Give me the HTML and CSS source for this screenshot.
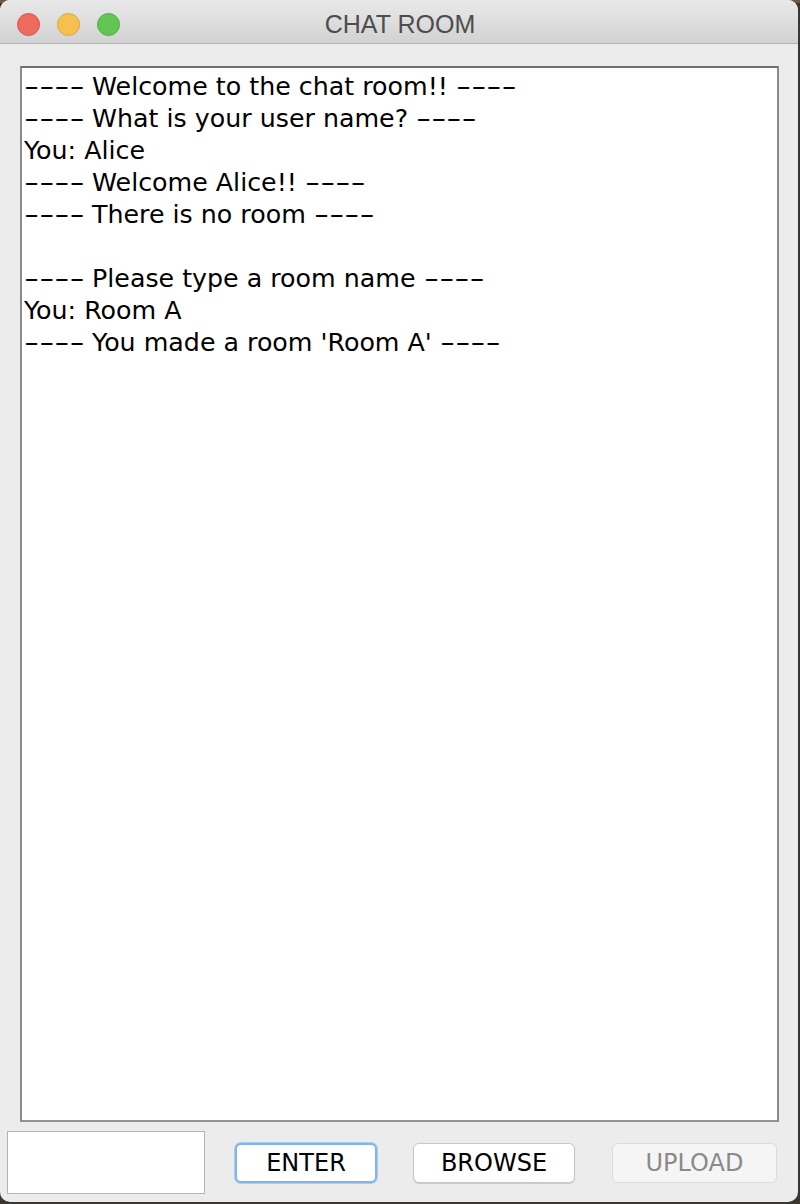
FILE: index.html
```html
<!DOCTYPE html>
<html>
<head>
<meta charset="utf-8">
<link rel="stylesheet" href="styles.css">
</head>
<body>
<div class="window">
  <div class="titlebar">
    <div class="lights">
      <span class="light red"></span>
      <span class="light yellow"></span>
      <span class="light green"></span>
    </div>
    <div class="title">CHAT ROOM</div>
  </div>
  <div class="body">
    <div class="log">
      <div class="line"><span class="dash">----</span> Welcome to the chat room!! <span class="dash">----</span></div>
      <div class="line"><span class="dash">----</span> What is your user name? <span class="dash">----</span></div>
      <div class="line">You: Alice</div>
      <div class="line"><span class="dash">----</span> Welcome Alice!! <span class="dash">----</span></div>
      <div class="line"><span class="dash">----</span> There is no room <span class="dash">----</span></div>
      <div class="line">&nbsp;</div>
      <div class="line"><span class="dash">----</span> Please type a room name <span class="dash">----</span></div>
      <div class="line">You: Room A</div>
      <div class="line"><span class="dash">----</span> You made a room 'Room A' <span class="dash">----</span></div>
    </div>
    <div class="controls">
      <div class="input"></div>
      <button class="btn enter">ENTER</button>
      <button class="btn browse">BROWSE</button>
      <button class="btn upload">UPLOAD</button>
    </div>
  </div>
</div>
</body>
</html>
```
FILE: styles.css
```css
html, body {
  margin: 0;
  padding: 0;
}
body {
  width: 800px;
  height: 1204px;
  overflow: hidden;
  background: linear-gradient(#6a5a47 0, #6a5a47 3px, #3c3630 3px);
}
.window {
  width: 798px;
  height: 1202px;
  background: #ececec;
  border-radius: 10px;
  overflow: hidden;
  display: flex;
  flex-direction: column;
}
.titlebar {
  height: 44px;
  flex: none;
  box-sizing: border-box;
  background: linear-gradient(#e9e9e9, #d2d2d2);
  border-bottom: 1px solid #b3b3b3;
  position: relative;
  display: flex;
  align-items: center;
  justify-content: center;
  padding-top: 5px;
}
.lights {
  position: absolute;
  left: 17px;
  top: 13px;
  display: flex;
  gap: 17px;
}
.light {
  width: 23px;
  height: 23px;
  border-radius: 50%;
  box-sizing: border-box;
}
.red { background: #ee6a5f; border: 1px solid #d6544a; }
.yellow { background: #f6c04f; border: 1px solid #dba63a; }
.green { background: #62c655; border: 1px solid #4fae43; }
.title {
  font-family: "Liberation Sans", Arial, sans-serif;
  font-size: 25px;
  color: #4d4d4d;
  margin-left: 2px;
}
.body {
  flex: 1;
  display: flex;
  flex-direction: column;
}
.log {
  margin: 22px 19px 0 20px;
  height: 1049px;
  background: #fff;
  border-top: 2px solid #6f6f6f;
  border-left: 2px solid #8a8a8a;
  border-right: 2px solid #8a8a8a;
  border-bottom: 2px solid #939393;
  padding: 3px 2px 0 2px;
  font-family: "DejaVu Sans", "Lucida Grande", sans-serif;
  font-size: 25.3px;
  color: #000;
}
.line {
  height: 32px;
  line-height: 32px;
  white-space: pre;
}
.dash {
  display: inline-block;
  width: 36px;
  transform: scaleX(1.66);
  transform-origin: left center;
  margin-right: 24px;
}
.controls {
  display: flex;
  align-items: center;
  margin-top: 9px;
  padding-left: 7px;
}
.input {
  width: 196px;
  height: 61px;
  background: #fff;
  border: 1px solid #b4b4b4;
}
.btn {
  height: 40px;
  box-sizing: border-box;
  border-radius: 6px;
  background: #fff;
  border: 1px solid #c8c8c8;
  box-shadow: 0 1px 1px rgba(0,0,0,0.15);
  font-family: "DejaVu Sans", "Lucida Grande", sans-serif;
  font-size: 24px;
  color: #000;
  padding: 0;
}
.enter {
  width: 142px;
  margin-left: 30px;
  border: 2px solid #82b4ea;
  box-shadow: 0 0 0 1px #a9cdf3;
}
.browse {
  width: 162px;
  margin-left: 36px;
}
.upload {
  width: 165px;
  margin-left: 37px;
  background: #f5f5f5;
  color: #8a8a8a;
  border-color: #dcdcdc;
  box-shadow: none;
}
```
